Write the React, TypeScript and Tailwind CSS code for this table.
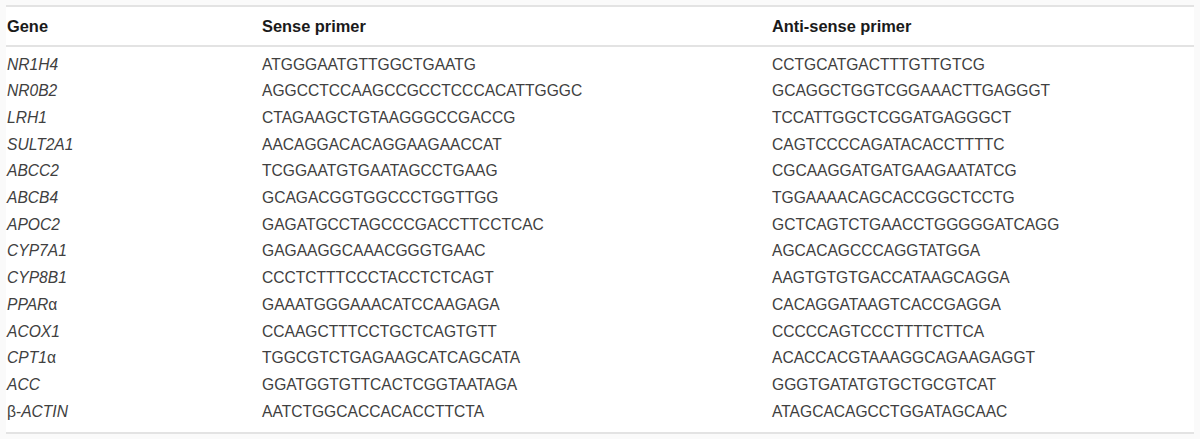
import React from "react"

type Row = { gene: React.ReactNode; sense: string; anti: string }

const rows: Row[] = [
  { gene: <i>NR1H4</i>, sense: "ATGGGAATGTTGGCTGAATG", anti: "CCTGCATGACTTTGTTGTCG" },
  { gene: <i>NR0B2</i>, sense: "AGGCCTCCAAGCCGCCTCCCACATTGGGC", anti: "GCAGGCTGGTCGGAAACTTGAGGGT" },
  { gene: <i>LRH1</i>, sense: "CTAGAAGCTGTAAGGGCCGACCG", anti: "TCCATTGGCTCGGATGAGGGCT" },
  { gene: <i>SULT2A1</i>, sense: "AACAGGACACAGGAAGAACCAT", anti: "CAGTCCCCAGATACACCTTTTC" },
  { gene: <i>ABCC2</i>, sense: "TCGGAATGTGAATAGCCTGAAG", anti: "CGCAAGGATGATGAAGAATATCG" },
  { gene: <i>ABCB4</i>, sense: "GCAGACGGTGGCCCTGGTTGG", anti: "TGGAAAACAGCACCGGCTCCTG" },
  { gene: <i>APOC2</i>, sense: "GAGATGCCTAGCCCGACCTTCCTCAC", anti: "GCTCAGTCTGAACCTGGGGGATCAGG" },
  { gene: <i>CYP7A1</i>, sense: "GAGAAGGCAAACGGGTGAAC", anti: "AGCACAGCCCAGGTATGGA" },
  { gene: <i>CYP8B1</i>, sense: "CCCTCTTTCCCTACCTCTCAGT", anti: "AAGTGTGTGACCATAAGCAGGA" },
  { gene: <><i>PPAR</i>α</>, sense: "GAAATGGGAAACATCCAAGAGA", anti: "CACAGGATAAGTCACCGAGGA" },
  { gene: <i>ACOX1</i>, sense: "CCAAGCTTTCCTGCTCAGTGTT", anti: "CCCCCAGTCCCTTTTCTTCA" },
  { gene: <><i>CPT1</i>α</>, sense: "TGGCGTCTGAGAAGCATCAGCATA", anti: "ACACCACGTAAAGGCAGAAGAGGT" },
  { gene: <i>ACC</i>, sense: "GGATGGTGTTCACTCGGTAATAGA", anti: "GGGTGATATGTGCTGCGTCAT" },
  { gene: <>β-<i>ACTIN</i></>, sense: "AATCTGGCACCACACCTTCTA", anti: "ATAGCACAGCCTGGATAGCAAC" },
]

export default function App() {
  return (
    <div className="w-[1200px] h-[439px] bg-[#fafafa] px-[6px] pt-[5px] font-['Liberation_Sans',Arial,sans-serif]">
      <div className="bg-white border-t-2 border-b-2 border-[#e3e3e3]">
        {/* Header */}
        <div className="flex items-center h-[40px] pt-[1px] border-b-2 border-[#e3e3e3] text-[16.4px] font-bold text-[#1a1a1a]">
          <div className="w-[255px] pl-[1px]">Gene</div>
          <div className="w-[510px] pl-[1px]">Sense primer</div>
          <div className="flex-1 pl-[1px]">Anti-sense primer</div>
        </div>

        {/* Body */}
        <div className="pt-[4px] pb-[7px] text-[15.6px] text-[#404040]">
          {rows.map((r, i) => (
            <div key={i} className="flex items-center h-[26.7px]">
              <div className="w-[255px] pl-[1px]">{r.gene}</div>
              <div className="w-[510px] pl-[1px]">{r.sense}</div>
              <div className="flex-1 pl-[1px]">{r.anti}</div>
            </div>
          ))}
        </div>
      </div>
    </div>
  )
}
